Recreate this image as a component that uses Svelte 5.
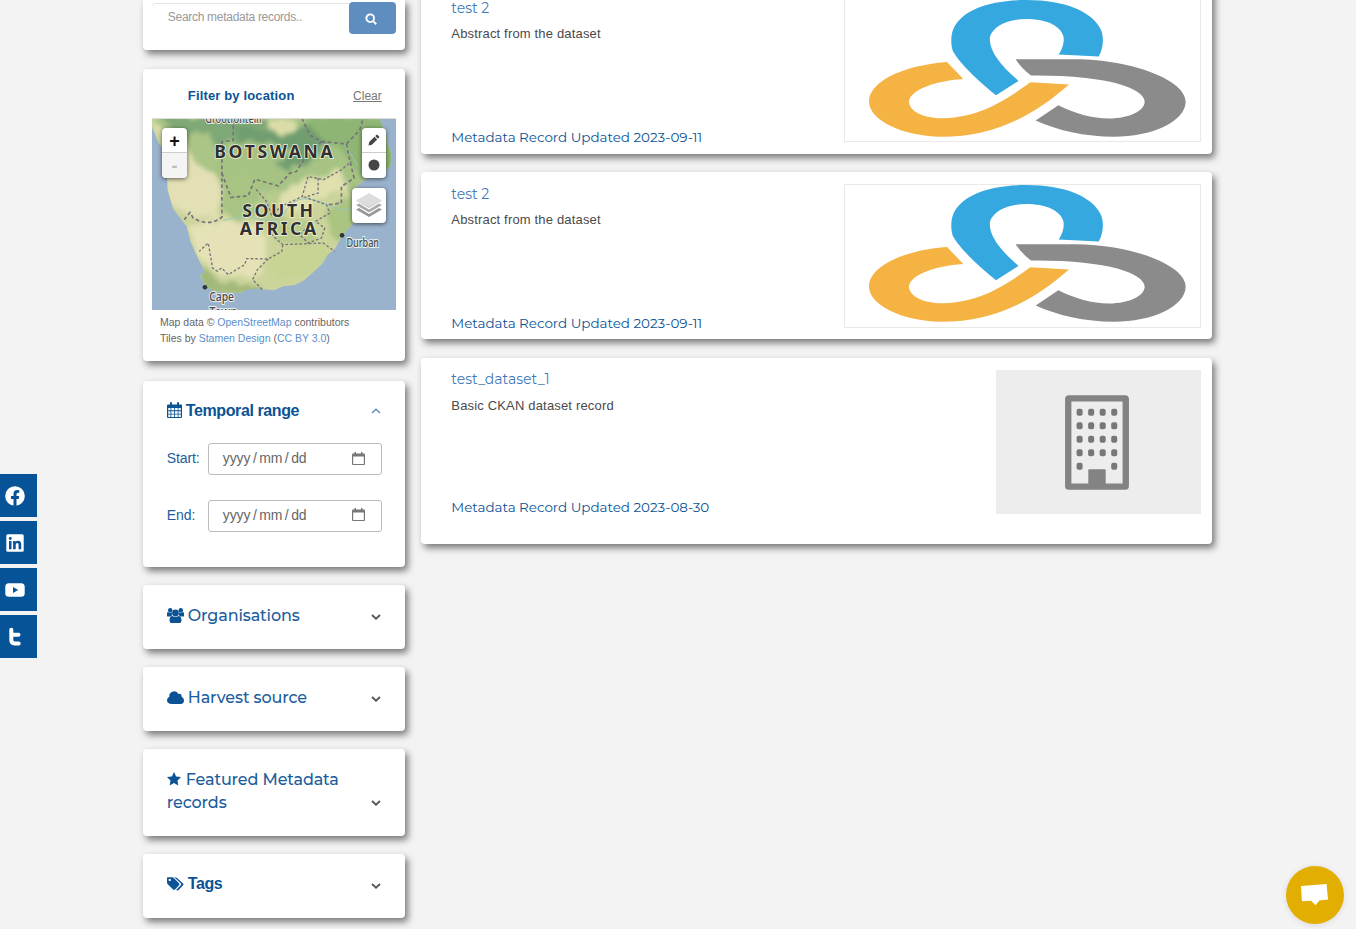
<script>
  const records = [
    { title: 'test 2', text: 'Abstract from the dataset', date: '2023-09-11', logo: true },
    { title: 'test 2', text: 'Abstract from the dataset', date: '2023-09-11', logo: true },
    { title: 'test_dataset_1', text: 'Basic CKAN dataset record', date: '2023-08-30', logo: false }
  ];
  const windows = [];
  for (let r = 0; r < 5; r++) for (let c = 0; c < 4; c++) if (r < 4 || c === 0 || c === 3) windows.push([34 + c * 34.5, 41 + r * 40.3]);
</script>

{#snippet chevron(up)}
  <svg class="chev" class:up viewBox="0 0 10 6"><path d="M1 1l4 3.700L9 1" /></svg>
{/snippet}

<div class="page">
  <aside class="side">
    <section class="card search">
      <div class="field">Search metadata records..</div>
      <button aria-label="Search"><svg viewBox="0 0 12 12"><circle cx="5" cy="5" r="3.700" /><path d="M7.800 7.800l3 3" /></svg></button>
    </section>

    <section class="card location">
      <header><h2>Filter by location</h2><a class="clear" href="#clear">Clear</a></header>
      <div class="map">
        <svg class="terrain" viewBox="21 27 733 576" preserveAspectRatio="none">
          <defs>
            <filter id="soft" x="-20%" y="-20%" width="140%" height="140%"><feTurbulence type="fractalNoise" baseFrequency=".03" numOctaves="3" seed="4" result="n" /><feDisplacementMap in="SourceGraphic" in2="n" scale="36" /><feGaussianBlur stdDeviation="6" /></filter>
            <clipPath id="land"><path d="M21 27V52L40 98L60 125L66 180L68 240L85 298L106 325L126 352L137 396L152 430L165 458L178 482L180 490L165 496L176 520L196 540L230 548L285 550L310 538L345 538L388 542L415 530L450 526L478 512L505 488L532 463L548 435L570 418L592 380L625 340L640 320L630 275L635 230L665 205L710 198L738 165L741 130L728 105L725 78L705 27Z" /></clipPath>
          </defs>
          <rect x="21" y="27" width="733" height="576" fill="#9ab3cd" />
          <g clip-path="url(#land)">
            <rect x="21" y="27" width="733" height="576" fill="#cbd49b" />
            <g filter="url(#soft)">
              <path d="M20 20H750V190L620 250L500 190L450 250L300 290L225 300L140 150L60 110Z" fill="#a6c384" />
              <path d="M50 20H360L380 60L340 100L260 95L215 120L190 75L110 90Z" fill="#7fa877" />
              <path d="M265 45L380 60L480 35L560 95L500 150L430 185L390 160L460 120L370 100L280 95Z" fill="#719e70" />
              <path d="M480 20H750V220L650 200L590 120L520 80Z" fill="#8eb573" />
              <path d="M370 30H450L455 65L410 75L370 60Z" fill="#dadda8" />
              <path d="M25 35L60 60L120 80L145 150L190 150L230 240L225 320L150 330L60 270V120Z" fill="#e2e0b4" />
              <path d="M135 75L190 65L220 130L205 190L150 160Z" fill="#aac585" />
              <path d="M235 190L310 180L350 215L320 260L345 320L270 330L235 300Z" fill="#a7c482" />
              <path d="M130 350L220 330L340 345L370 410L350 500L230 500L160 440Z" fill="#e4e2b6" />
              <path d="M345 250L400 240L420 330L500 340L500 400L400 400L350 330Z" fill="#b7cb8b" />
              <path d="M410 240L540 200L580 170L610 240L540 260L470 310L400 300Z" fill="#dfe0ad" />
              <path d="M460 400L570 400L530 470L400 520L360 455Z" fill="#c6d493" />
              <path d="M545 300L640 240V350L590 390L560 380Z" fill="#aac481" />
              <path d="M160 475L195 485L225 520L340 530L370 555H180Z" fill="#a2ba79" />
            </g>
            <g fill="none" stroke="#9cc6bd" stroke-width="3"><path d="M235 332Q300 315 350 330T430 295T550 285T640 260M600 105Q625 140 640 170M360 230L365 290L395 320" /></g>
          </g>
          <g class="borders">
            <path d="M265 27V92L231 95V322Q205 345 165 335L145 325L135 308L118 330M231 190L258 263L310 258L330 208L400 228L435 190L455 185L480 145L530 95L495 75L472 27M530 95L605 102L645 60L655 27M605 102L615 150L628 205L590 230L590 280L550 285" />
            <path d="M530 208L490 200L472 260L410 290L380 315L365 275L330 235M520 205L520 250L480 262L545 285L555 310L512 335L540 355L530 385L490 400L465 375L495 345M535 210L590 180L620 155M378 373L414 405L535 400L570 425M414 405L411 425L370 448L305 447L300 465L250 495L230 475L217 485L203 475L190 400L163 425M370 448L338 480L323 510L352 540" />
          </g>
          <g class="country"><text x="208" y="143" textLength="356">BOTSWANA</text><text x="292" y="322" textLength="213">SOUTH</text><text x="285" y="375" textLength="229">AFRICA</text></g>
          <g class="town"><text x="181" y="39" textLength="170" lengthAdjust="spacingAndGlyphs">Grootfontein</text><text x="605" y="413" textLength="98" lengthAdjust="spacingAndGlyphs">Durban</text><text x="193" y="573" textLength="74" lengthAdjust="spacingAndGlyphs">Cape</text><text x="193" y="621" textLength="84" lengthAdjust="spacingAndGlyphs">Town</text></g>
          <circle cx="592" cy="377" r="7" fill="#333" /><circle cx="180" cy="533" r="7" fill="#333" />
        </svg>
        <div class="ctl zoom"><span>+</span><span class="off">-</span></div>
        <div class="ctl draw">
          <span><svg viewBox="0 0 12 12"><path fill="#464646" d="M.5 11.500l.7-3.400 5.300-5.300 2.700 2.700-5.300 5.300zM7.200 2.100l1.200-1.200q.6-.6 1.200 0l1.500 1.500q.6.600 0 1.200L9.900 4.800z" /></svg></span>
          <span><svg viewBox="0 0 12 12"><circle cx="6" cy="6" r="5.500" fill="#464646" /></svg></span>
        </div>
        <div class="ctl layers"><svg viewBox="0 0 26 26"><path fill="#969696" d="M0 17.500L13 25l13-7.500-3-1.500-10 6-10-6z" /><path fill="#aaa" d="M0 13l13 7.500L26 13l-3-1.500-10 6-10-6z" /><path fill="#c2c2c2" d="M0 8.500L13 16l13-7.500z" /><path fill="#ddd" d="M0 8.500L13 1l13 7.500L13 15z" /></svg></div>
      </div>
      <p>Map data © <a href="#osm">OpenStreetMap</a> contributors<br />Tiles by <a href="#stamen">Stamen Design</a> (<a href="#cc">CC BY 3.0</a>)</p>
    </section>

    <section class="card temporal">
      <header class="facet bold">
        <h2><svg width="15" height="16" viewBox="0 0 15 16"><path fill="#0b5394" fill-rule="evenodd" d="M1 2.500h2V1q0-1 1-1t1 1v1.500h5V1q0-1 1-1t1 1v1.500h2q1 0 1 1V15q0 1-1 1H1q-1 0-1-1V3.500q0-1 1-1zM1.200 6v2.300h2.300V6zm3.100 0v2.300h2.800V6zm3.600 0v2.300h2.800V6zm3.600 0v2.300h2.300V6zM1.200 9.200v2.500h2.300V9.200zm3.100 0v2.500h2.800V9.200zm3.600 0v2.500h2.800V9.200zm3.600 0v2.500h2.300V9.200zM1.200 12.600V15h2.300v-2.400zm3.100 0V15h2.800v-2.400zm3.600 0V15h2.800v-2.400zm3.600 0V15h2.300v-2.400z" /></svg>Temporal range</h2>
        {@render chevron(true)}
      </header>
      {#each ['Start:', 'End:'] as label}
        <div class="daterow"><span>{label}</span>
          <div class="date"><span>yyyy<i>/</i>mm<i>/</i>dd</span><svg viewBox="0 0 13 13"><path fill="#777" fill-rule="evenodd" d="M2.500 0H4v1.500h5V0h1.500v1.500H12q1 0 1 1V12q0 1-1 1H1q-1 0-1-1V2.500q0-1 1-1h1.500zM1.200 4.500V12h10.600V4.500z" /></svg></div>
        </div>
      {/each}
    </section>

    <section class="card facet"><h2><svg width="17" height="15" viewBox="0 0 17 15"><g fill="#0b5394"><circle cx="3.200" cy="2.300" r="2.200" /><circle cx="13.800" cy="2.300" r="2.200" /><circle cx="8.500" cy="5" r="3.400" /><path d="M0 8V5.500q0-1.500 1-1.500 2.200 1.200 4 .3Q4.600 6 5.300 7.500 4 7.700 3.300 8.500H1Q0 8.500 0 8zM17 8V5.500Q17 4 16 4q-2.200 1.200-4 .3.400 1.700-.3 3.200 1.300.2 2 1H16q1 0 1-.5zM2.500 12.800q0-4.800 2.800-4.800 3.200 1.800 6.400 0 2.800 0 2.800 4.800 0 2.200-2 2.200h-8q-2 0-2-2.200z" /></g></svg>Organisations</h2>{@render chevron(false)}</section>
    <section class="card facet"><h2><svg class="cloud" width="17" height="13" viewBox="0 0 17 13"><path fill="#0b5394" d="M4 13Q0 12.600 0 9.300q0-2.500 2.300-3.500Q2 1.500 6 .4q3.700-.8 5.500 2.600 3-.8 3.200 2.800Q17 6.800 17 9.400q0 3.400-3.500 3.600z" /></svg>Harvest source</h2>{@render chevron(false)}</section>
    <section class="card facet two"><h2><svg class="star" width="14" height="14" viewBox="0 0 14 14"><path fill="#0b5394" d="M7 0l2.100 4.400 4.900.7-3.500 3.400.8 4.900L7 11.100l-4.300 2.300.8-4.900L0 5.100l4.900-.7z" /></svg>Featured Metadata<br />records</h2>{@render chevron(false)}</section>
    <section class="card facet bold tags"><h2><svg width="17" height="14" viewBox="0 0 17 14"><path fill="#0b5394" fill-rule="evenodd" d="M0 1.200Q0 .3.900.300H5q1 0 2 1l5 5q.9.900 0 1.900l-4 4.300q-1 .9-1.900 0L1 7.400q-1-1-1-2zM2.700 1.700a1.200 1.200 0 1 0 .1 0zM7.300.3h1q1 0 2 1l5.800 5.100q.9.900 0 1.900l-4.500 4.800q-.8.700-1.800.3l-.5-.6 4.700-4.900q.6-.8 0-1.500z" /></svg>Tags</h2>{@render chevron(false)}</section>
  </aside>

  <main>
    {#each records as r}
      <article class="card" class:last={!r.logo}>
        <div class="info"><h3>{r.title}</h3><p>{r.text}</p><time>Metadata Record Updated {r.date}</time></div>
        {#if r.logo}
          <div class="frame"><svg viewBox="15 60 1065 425" preserveAspectRatio="none">
            <path fill="#36a8e0" d="M468 346C420 308 360 252 339 214C332 195 332 165 340 147C365 90 450 60 558 60C680 60 760 97 784 152C792 174 790 205 776 230L656 224C671 202 673 180 670 168C660 135 615 117 558 117C500 117 459 140 450 170C445 206 475 252 536 303Z" />
            <path fill="#f5b344" d="M321 246L370 297C275 303 205 335 207 367C210 395 250 415 308 415C430 412 510 350 571 307L687 314C590 400 470 471 302 471C185 469 87 420 87 365C87 308 180 257 321 246Z" />
            <path fill="#8b8b8b" d="M527 238H705C880 239 1037 302 1037 365C1037 425 935 471 822 471C735 471 650 451 587 422L655 376C705 401 755 415 807 416C870 416 914 392 914 365C912 325 800 285 573 287Q542 263 527 238Z" />
          </svg></div>
        {:else}
          <div class="org"><svg viewBox="0 0 190 284"><rect x="9" y="10" width="172" height="264" rx="2" fill="none" stroke="#838383" stroke-width="19" /><path fill="#838383" d="M69 225q0-3 3-3h46q3 0 3 3v50H69z" />{#each windows as [x, y]}<rect {x} {y} width="18" height="21" rx="6" fill="#777" />{/each}</svg></div>
        {/if}
      </article>
    {/each}
  </main>

  <nav>
    <a href="#facebook" aria-label="Facebook"><svg viewBox="0 0 20 20"><circle cx="10" cy="10" r="9.800" fill="#fff" /><path fill="#075397" d="M8.500 20v-7H6v-3h2.500V8q0-3.900 3.800-3.900l2 .2v2.500h-1.300q-1.500 0-1.500 1.500V10h2.700l-.5 3h-2.200v7z" /></svg></a>
    <a href="#linkedin" aria-label="LinkedIn"><svg viewBox="0 0 20 20"><rect x="1.300" y="1.300" width="17.400" height="17.400" rx="1.500" fill="#fff" /><path fill="#075397" d="M4 8h2.500v8.200H4zM5.250 4a1.450 1.450 0 1 1 0 2.900 1.450 1.450 0 0 1 0-2.900zM8.100 8h2.400v1.100q.8-1.300 2.500-1.300 3.200 0 3.200 3.600v4.800h-2.600v-4.300q0-1.900-1.300-1.900-1.600 0-1.600 2v4.200H8.100z" /></svg></a>
    <a href="#youtube" aria-label="YouTube"><svg viewBox="0 0 20 20"><rect x=".3" y="3.200" width="19.400" height="13.600" rx="3.500" fill="#fff" /><path fill="#075397" d="M8 7l5.200 3L8 13z" /></svg></a>
    <a href="#twitter" aria-label="Twitter"><svg viewBox="0 0 20 20"><path fill="none" stroke="#fff" stroke-width="4" stroke-linecap="round" stroke-linejoin="round" d="M6.300 2.800V13q0 3.400 3.400 3.400h4M6.300 7.700h7.200" /></svg></a>
  </nav>
  <button class="chat" aria-label="Chat"><svg viewBox="0 0 30 24"><path fill="#fff" d="M1 3L27.500 1 29 17l-9 1-4 5-4.500-4.500L2 19z" /></svg></button>
</div>

<style>
  :global(body) { margin: 0; background: #f3f3f3; overflow: hidden; }
  * { box-sizing: border-box; }
  h2, h3, p { margin: 0; font-weight: 400; }
  a { color: #5a8fcb; text-decoration: none; }
  button { border: 0; padding: 0; }
  .page { height: 929px; overflow: hidden; display: grid; grid-template-columns: 262px 791px; column-gap: 16px; padding-left: 143.300px; align-items: start; font-family: "Liberation Sans", Arial, sans-serif; }
  .card { background: #fff; border-radius: 4px; box-shadow: 3px 4px 7px rgba(0, 0, 0, .5); }
  .side { display: flex; flex-direction: column; }
  .search { height: 50px; display: flex; padding: 2px 9px 0; border-radius: 0 0 4px 4px; }
  .field { flex: 1; height: 32px; margin-top: 1px; border-top: 1px solid #e3e3e3; border-radius: 4px 0 0 4px; padding: 6px 15.500px; font-size: 12px; letter-spacing: -.29px; line-height: 15px; color: #999; }
  .search button { width: 47.500px; height: 32px; border-radius: 4px; background: #5e8dc0; display: grid; place-items: center; }
  .search button svg { width: 12.500px; fill: none; stroke: #fff; stroke-width: 1.800; position: relative; left: -1px; top: 1px; }
  .location { height: 292px; margin-top: 18.800px; padding: 0 9px; }
  .location header { height: 50px; border-bottom: 1px solid #ddd; display: flex; align-items: center; justify-content: space-between; padding: 5px 14.500px 0 35.500px; }
  .location h2 { font-size: 13px; letter-spacing: .15px; font-weight: 700; color: #0b5394; }
  .clear { font-size: 12px; color: #777; text-decoration: underline; }
  .map { position: relative; height: 191.500px; overflow: hidden; }
  .terrain { width: 100%; height: 100%; display: block; }
  .borders { fill: none; stroke: #78717a; stroke-width: 5; stroke-dasharray: 11 8; }
  .borders path:last-child { stroke-width: 4; stroke-dasharray: 8 6; }
  .country { font: 700 53px "Noto Sans", "Open Sans", sans-serif; fill: #303030; stroke: #eef0d8; stroke-width: 5; }
  .country text, .town text { paint-order: stroke; }
  .town { font: 500 38px "Noto Sans", "Open Sans", sans-serif; fill: #484848; stroke: #eef1ee; stroke-width: 6; }
  .ctl { position: absolute; background: #fff; border-radius: 4px; box-shadow: 0 1px 4px rgba(0, 0, 0, .6); overflow: hidden; }
  .ctl span { display: grid; place-items: center; height: 25px; font: 700 18px/26px "Liberation Sans", sans-serif; color: #111; border-bottom: 1px solid #ccc; }
  .ctl span:last-child { border: 0; }
  .ctl .off { background: #f4f4f4; color: #bbb; }
  .zoom { left: 10px; top: 9px; width: 24.500px; height: 50px; }
  .draw { right: 10px; top: 9px; width: 24.500px; height: 50px; }
  .draw svg { width: 12px; height: 12px; }
  .layers { right: 10px; top: 69px; width: 34.500px; height: 35px; display: grid; place-items: center; }
  .layers svg { width: 26px; }
  .location p { padding: 5px 7.700px; font-size: 10.500px; line-height: 15.500px; color: #666; white-space: nowrap; }
  .temporal { height: 186px; margin-top: 20px; padding: 17px 23.500px; }
  .facet { display: flex; justify-content: space-between; align-items: center; }
  .card.facet { height: 63.500px; margin-top: 18.500px; padding: 0 23.500px 3px; }
  .facet h2 { font: 500 16px/23px Montserrat, Inter, sans-serif; letter-spacing: -.13px; color: #1b5d9c; white-space: nowrap; }
  .facet.bold h2 { font: 700 16px/23px "Liberation Sans", sans-serif; letter-spacing: -.4px; color: #0b5394; }
  .facet h2 svg { vertical-align: -2px; margin-right: 4px; }
  .facet h2 svg.star { vertical-align: -1px; margin-right: 5px; }
  .facet h2 svg.cloud { vertical-align: -1px; }
  .card.facet.two { height: 86.500px; }
  .card.facet.tags { padding-bottom: 5px; }
  .facet.two .chev { margin-top: 24px; }
  .tags .chev { margin-top: 4px; }
  .chev { width: 10px; height: 6px; margin: 2px 1px 0; fill: none; stroke: #555; stroke-width: 1.800; }
  .chev.up { transform: rotate(180deg); stroke: #5e8dc0; stroke-width: 1.400; }
  .temporal header { height: 25px; margin-bottom: 20px; }
  .daterow { display: flex; justify-content: space-between; align-items: center; height: 33px; margin-bottom: 23.500px; font-size: 14px; letter-spacing: -.1px; color: #1b5d9c; }
  .daterow > span { margin-top: -2px; }
  .date { width: 174px; height: 32px; border: 1px solid #bbb; border-radius: 3px; display: flex; justify-content: space-between; align-items: center; padding: 0 16px 2px 14px; color: #666; }
  .date i { font-style: normal; margin: 0 2.500px; }
  .date svg { width: 13px; }
  main { margin-top: -13.500px; display: flex; flex-direction: column; gap: 18.600px; }
  article { height: 167px; padding: 12px 11.500px 0 30px; display: flex; justify-content: space-between; }
  article.last { height: 186px; }
  .info { height: 144px; display: flex; flex-direction: column; }
  h3 { margin-top: .6px; font: 400 14px/18px Montserrat, Inter, sans-serif; color: #3f79ba; }
  .info p { margin-top: 8.400px; font-size: 13px; letter-spacing: .17px; line-height: 17px; color: #4a4a4a; }
  time { margin-top: 86.600px; font: 400 13.500px/17px Montserrat, Inter, sans-serif; letter-spacing: -.03px; color: #0b5394; white-space: nowrap; }
  .last time { margin-top: 85px; }
  .frame { width: 357px; height: 143.500px; border: 1px solid #e9e9e9; }
  .frame svg { display: block; width: 100%; height: 100%; }
  .org { width: 204.500px; height: 144px; background: #ededed; display: grid; place-items: center; }
  .org svg { width: 64px; height: 95px; position: relative; left: -2px; top: 1px; }
  nav { position: absolute; left: 0; top: 474px; display: flex; flex-direction: column; gap: 4px; }
  nav a { width: 37px; height: 43px; background: #075397; display: flex; align-items: center; padding-left: 5px; }
  nav svg { width: 20px; height: 20px; }
  .chat { position: absolute; left: 1285.500px; top: 865.500px; width: 58px; height: 58px; border-radius: 50%; background: #e2ae02; display: grid; place-items: center; box-shadow: 0 1px 6px rgba(0, 0, 0, .1); }
  .chat svg { width: 29px; }
</style>
